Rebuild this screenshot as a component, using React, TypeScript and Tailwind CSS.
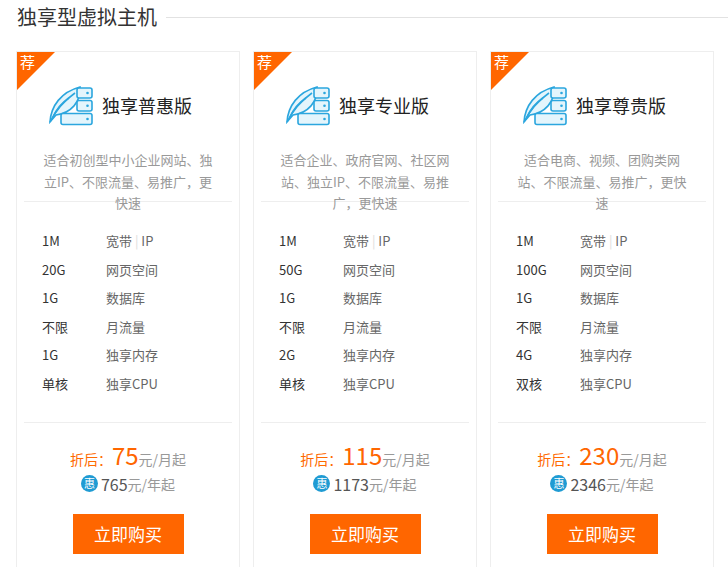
const plans = [
  {
    name: "独享普惠版",
    desc: "适合初创型中小企业网站、独立IP、不限流量、易推广，更快速",
    specs: ["1M", "20G", "1G", "不限", "1G", "单核"],
    month: "75",
    year: "765",
  },
  {
    name: "独享专业版",
    desc: "适合企业、政府官网、社区网站、独立IP、不限流量、易推广，更快速",
    specs: ["1M", "50G", "1G", "不限", "2G", "单核"],
    month: "115",
    year: "1173",
  },
  {
    name: "独享尊贵版",
    desc: "适合电商、视频、团购类网站、不限流量、易推广，更快速",
    specs: ["1M", "100G", "1G", "不限", "4G", "双核"],
    month: "230",
    year: "2346",
  },
];

const labels = ["宽带", "网页空间", "数据库", "月流量", "独享内存", "独享CPU"];

function HostIcon() {
  return (
    <svg width="46" height="42" viewBox="0 0 46 42" fill="none" stroke="#2ba6de" strokeWidth="1.6" aria-hidden="true">
      <path d="M3 38 C4 22 14 8 33 3 C34 18 24 29 9 31 Z" fill="#e4f5fc" />
      <path d="M3 38 C9 26 18 16 28 9" />
      <path d="M6 33 C10 24 16 18 22 14" />
      <rect x="30" y="4" width="15" height="10" rx="2" fill="#e4f5fc" />
      <rect x="30" y="16.5" width="15" height="10.5" rx="2" fill="#e4f5fc" />
      <rect x="14" y="29.5" width="31" height="11" rx="2" fill="#e4f5fc" />
      <circle cx="40.5" cy="9" r="1.3" fill="#2ba6de" stroke="none" />
      <circle cx="40.5" cy="21.8" r="1.3" fill="#2ba6de" stroke="none" />
      <circle cx="40.5" cy="35" r="1.3" fill="#2ba6de" stroke="none" />
    </svg>
  );
}

function PlanCard({ plan }: { plan: (typeof plans)[number] }) {
  return (
    <div className="relative w-[224px] flex-none border border-[#eeeeee] bg-white pb-[30px]">
      <div className="absolute left-0 top-0 h-[38px] w-[38px] bg-[#ff6600] [clip-path:polygon(0_0,100%_0,0_100%)]">
        <span className="absolute left-[3px] top-[0px] text-[15px] leading-[20px] text-white">荐</span>
      </div>

      <div className="flex items-center gap-[9px] pl-[30px] pt-[32px]">
        <HostIcon />
        <span className="text-[18px] leading-[24px] text-[#222]">{plan.name}</span>
      </div>

      <div className="mt-[23px] h-[52px] px-[21px] text-center text-[13px] leading-[21.5px] text-[#999]">
        {plan.desc}
      </div>
      <div className="mx-[7px] h-px bg-[#eeeeee]" />

      <ul className="pb-[23px] pl-[25px] pt-[25px] text-[13px] leading-[28.6px]">
        {plan.specs.map((v, i) => (
          <li key={i} className="flex">
            <span className="w-[64px] text-[#333]">{v}</span>
            <span className="text-[#666]">
              {i === 0 ? (
                <>
                  宽带 <span className="text-[#ddd]">|</span> IP
                </>
              ) : (
                labels[i]
              )}
            </span>
          </li>
        ))}
      </ul>
      <div className="mx-[7px] h-px bg-[#eeeeee]" />

      <div className="mt-[14px] flex h-[30px] items-baseline justify-center">
        <span className="text-[14px] text-[#ff6a00]">折后：</span>
        <span className="text-[24px] text-[#ff6600]">{plan.month}</span>
        <span className="text-[14px] text-[#999]">元/月起</span>
      </div>

      <div className="mt-[6px] flex items-center justify-center">
        <span className="mr-[3px] flex h-[17px] w-[17px] items-center justify-center rounded-full bg-[#1f9bd3] text-[11px] leading-none text-white">
          惠
        </span>
        <span className="text-[16px] leading-[22px] text-[#555]">{plan.year}</span>
        <span className="text-[14px] leading-[22px] text-[#999]">元/年起</span>
      </div>

      <div className="mt-[19px] flex justify-center">
        <button type="button" className="h-[40px] w-[111px] bg-[#ff6600] text-[17px] text-white">
          立即购买
        </button>
      </div>
    </div>
  );
}

export default function App() {
  return (
    <div className="h-[567px] w-[728px] overflow-hidden bg-white font-['Noto_Sans_CJK_SC','Liberation_Sans',sans-serif]">
      <div className="flex h-[34px] items-center pl-[17px]">
        <h2 className="text-[20px] font-normal leading-none text-[#333]">独享型虚拟主机</h2>
        <div className="ml-[9px] h-px flex-1 bg-[#e2e2e2]" />
      </div>
      <div className="mt-[17px] flex gap-[13px] pl-[16px]">
        {plans.map((p) => (
          <PlanCard key={p.name} plan={p} />
        ))}
      </div>
    </div>
  );
}
